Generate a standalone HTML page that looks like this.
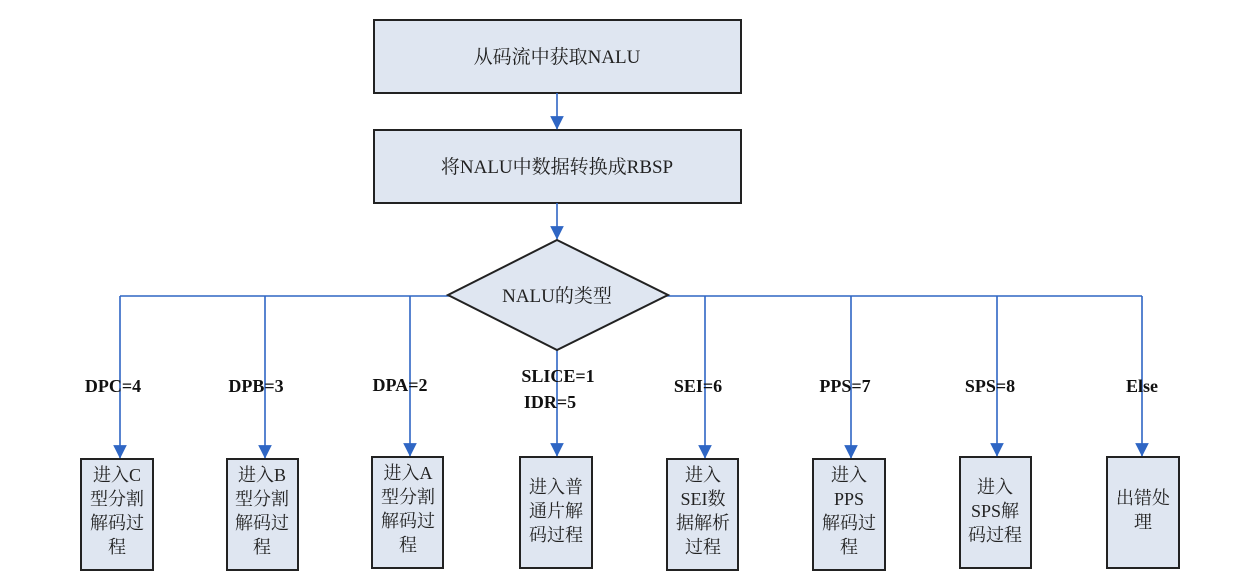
<!DOCTYPE html>
<html><head><meta charset="utf-8"><style>
html,body{margin:0;padding:0;background:#fff;}
body{width:1252px;height:588px;overflow:hidden;position:relative;font-family:"Liberation Serif","Noto Serif CJK SC",serif;}
</style></head><body>
<svg width="1252" height="588" xmlns="http://www.w3.org/2000/svg" style="position:absolute;left:0;top:0">
<defs><marker id="a" viewBox="0 0 10 10" refX="9.5" refY="5" markerWidth="8.5" markerHeight="8.5" markerUnits="strokeWidth" orient="auto"><path d="M0 0L10 5L0 10z" fill="#2f66c4"/></marker></defs>
<g fill="#dfe6f1" stroke="#222" stroke-width="2">
<rect x="374" y="20" width="367" height="73"/>
<rect x="374" y="130" width="367" height="73"/>
</g>
<g stroke="#2f66c4" stroke-width="1.6" fill="none">
<line x1="557" y1="93" x2="557" y2="129" marker-end="url(#a)"/>
<line x1="557" y1="203" x2="557" y2="239" marker-end="url(#a)"/>
<line x1="120" y1="296" x2="1142" y2="296"/>
<line x1="120" y1="296" x2="120" y2="458" marker-end="url(#a)"/>
<line x1="265" y1="296" x2="265" y2="458" marker-end="url(#a)"/>
<line x1="410" y1="296" x2="410" y2="456" marker-end="url(#a)"/>
<line x1="557" y1="296" x2="557" y2="456" marker-end="url(#a)"/>
<line x1="705" y1="296" x2="705" y2="458" marker-end="url(#a)"/>
<line x1="851" y1="296" x2="851" y2="458" marker-end="url(#a)"/>
<line x1="997" y1="296" x2="997" y2="456" marker-end="url(#a)"/>
<line x1="1142" y1="296" x2="1142" y2="456" marker-end="url(#a)"/>
</g>
<polygon points="557,240 668,295 557,350 448,295" fill="#dfe6f1" stroke="#222" stroke-width="2"/>
<g fill="#dfe6f1" stroke="#222" stroke-width="2">
<rect x="81" y="459" width="72" height="111"/>
<rect x="227" y="459" width="71" height="111"/>
<rect x="372" y="457" width="71" height="111"/>
<rect x="520" y="457" width="72" height="111"/>
<rect x="667" y="459" width="71" height="111"/>
<rect x="813" y="459" width="72" height="111"/>
<rect x="960" y="457" width="71" height="111"/>
<rect x="1107" y="457" width="72" height="111"/>
</g>
<g font-family="Liberation Serif, Noto Serif CJK SC, serif" fill="#222" text-anchor="middle" font-size="19">
<text x="557" y="63">从码流中获取NALU</text>
<text x="557" y="173">将NALU中数据转换成RBSP</text>
<text x="557" y="302">NALU的类型</text>
</g>
<g font-family="Liberation Serif, serif" font-weight="bold" fill="#111" font-size="18" text-anchor="middle">
<text x="113" y="392">DPC=4</text>
<text x="256" y="392">DPB=3</text>
<text x="400" y="391">DPA=2</text>
<text x="558" y="382">SLICE=1</text>
<text x="550" y="408">IDR=5</text>
<text x="698" y="392">SEI=6</text>
<text x="845" y="392">PPS=7</text>
<text x="990" y="392">SPS=8</text>
<text x="1142" y="392">Else</text>
</g>
<g font-family="Liberation Serif, Noto Serif CJK SC, serif" fill="#222" font-size="18" text-anchor="middle">
<text x="117" y="481">进入C</text><text x="117" y="505">型分割</text><text x="117" y="529">解码过</text><text x="117" y="553">程</text>
<text x="262" y="481">进入B</text><text x="262" y="505">型分割</text><text x="262" y="529">解码过</text><text x="262" y="553">程</text>
<text x="408" y="479">进入A</text><text x="408" y="503">型分割</text><text x="408" y="527">解码过</text><text x="408" y="551">程</text>
<text x="556" y="493">进入普</text><text x="556" y="517">通片解</text><text x="556" y="541">码过程</text>
<text x="703" y="481">进入</text><text x="703" y="505">SEI数</text><text x="703" y="529">据解析</text><text x="703" y="553">过程</text>
<text x="849" y="481">进入</text><text x="849" y="505">PPS</text><text x="849" y="529">解码过</text><text x="849" y="553">程</text>
<text x="995" y="493">进入</text><text x="995" y="517">SPS解</text><text x="995" y="541">码过程</text>
<text x="1143" y="504">出错处</text><text x="1143" y="528">理</text>
</g>
</svg>
</body></html>
